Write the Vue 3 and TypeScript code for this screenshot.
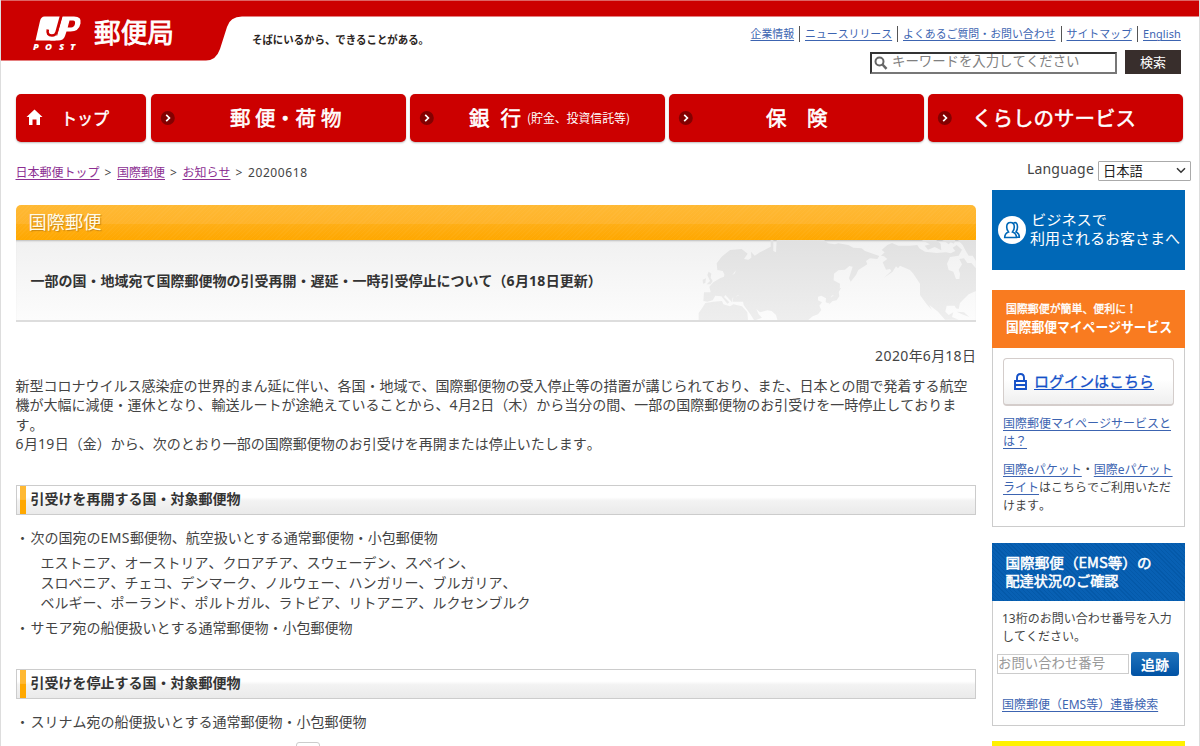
<script setup lang="ts">
interface NavLabel { text: string; x: number; y: number; size: number; length: number; stroke: number }
interface NavItem { width: number; home?: boolean; labels: NavLabel[] }

const utilityLinks: { text: string; width: number }[] = [
  { text: '企業情報', width: 43.5 },
  { text: 'ニュースリリース', width: 87 },
  { text: 'よくあるご質問・お問い合わせ', width: 152.5 },
  { text: 'サイトマップ', width: 65.5 },
  { text: 'English', width: 38 },
]

const navItems: NavItem[] = [
  { width: 130, home: true, labels: [{ text: 'トップ', x: 45, y: 31, size: 17, length: 48, stroke: 0.5 }] },
  {
    width: 255,
    labels: [
      { text: '郵', x: 79, y: 31.5, size: 20.5, length: 20.5, stroke: 0.6 },
      { text: '便', x: 104, y: 31.5, size: 20.5, length: 20.5, stroke: 0.6 },
      { text: '・', x: 124, y: 31.5, size: 20.5, length: 20.5, stroke: 0.6 },
      { text: '荷', x: 144.5, y: 31.5, size: 20.5, length: 20.5, stroke: 0.6 },
      { text: '物', x: 170, y: 31.5, size: 20.5, length: 20.5, stroke: 0.6 },
    ],
  },
  {
    width: 255,
    labels: [
      { text: '銀', x: 59, y: 31.5, size: 20.5, length: 20.5, stroke: 0.6 },
      { text: '行', x: 90.500, y: 31.5, size: 20.5, length: 20.5, stroke: 0.6 },
      { text: '(貯金、投資信託等)', x: 117, y: 29, size: 12, length: 103, stroke: 0 },
    ],
  },
  {
    width: 255,
    labels: [
      { text: '保', x: 97, y: 31.5, size: 20.5, length: 20.5, stroke: 0.6 },
      { text: '険', x: 138, y: 31.5, size: 20.5, length: 20.5, stroke: 0.6 },
    ],
  },
  { width: 255, labels: [{ text: 'くらしのサービス', x: 44, y: 31.5, size: 20.5, length: 164, stroke: 0.5 }] },
]

const crumbs: string[] = ['日本郵便トップ', '国際郵便', 'お知らせ']
</script>

<template>
  <div class="page">
    <header class="header">
      <svg class="header-shape" width="1200" height="62" viewBox="0 0 1200 62">
        <path d="M0 0H1200V16.500H242Q230 16.500 227 27L220 49Q216 60.500 206 60.500H0Z" fill="#c00" />
        <path d="M0 .5H1200" stroke="#d66" />
      </svg>
      <svg class="logo" width="440" height="62" viewBox="0 0 440 62">
        <path d="M44.500 16.500H61L55.500 40.500H35.500L40 21Q41 16.500 44.500 16.500Z" fill="#fff" />
        <path d="M62.500 16.500H74Q82 16.500 80.500 23.500Q79 31.500 70.500 31.500H66.500L65 36Q63.500 40.500 58 40.500H50L54 36H57Z" fill="#fff" />
        <path d="M69.500 20.500H73Q75.500 20.500 75 23.700Q74.200 27.500 71 27.500H67.700Z" fill="#c00" />
        <path d="M61.200 15.500L56.600 32Q55.700 35.500 52 35.500Q46.500 35.500 47.800 29.500" fill="none" stroke="#c00" stroke-width="2.600" />
        <g fill="#fff" font-family="'Open Sans', sans-serif" font-size="9.500" font-style="italic" font-weight="800">
          <text x="33" y="50">P</text><text x="45" y="50">O</text><text x="59" y="50">S</text><text x="70" y="50">T</text>
        </g>
        <text x="94" y="42.500" font-size="26.800" textLength="80" lengthAdjust="spacingAndGlyphs" fill="#fff" stroke="#fff" stroke-width=".8">郵便局</text>
        <text x="252" y="44" font-size="11" font-weight="700" textLength="177" lengthAdjust="spacingAndGlyphs" fill="#2b2421">そばにいるから、できることがある。</text>
      </svg>
      <div class="tools">
        <nav class="utility">
          <a v-for="link in utilityLinks" :key="link.text" href="#" :style="{ width: link.width + 'px' }">{{ link.text }}</a>
        </nav>
        <div class="search">
          <div class="search-field">
            <svg width="14" height="14" viewBox="0 0 14 14" fill="none" stroke="#666">
              <circle cx="5.500" cy="5.500" r="4" stroke-width="2" /><path d="M8.500 8.500L12.500 12.800" stroke-width="2.500" />
            </svg>
            <span>キーワードを入力してください</span>
          </div>
          <button class="search-button">検索</button>
        </div>
      </div>
    </header>

    <nav class="global-nav">
      <a v-for="(item, i) in navItems" :key="i" href="#" class="nav-item" :style="{ width: item.width + 'px' }">
        <svg :width="item.width" height="48" :viewBox="`0 0 ${item.width} 48`" fill="#fff">
          <path v-if="item.home" d="M18.500 15.500L26.500 23H24V31H20.500V25.500H16.500V31H13V23H10.500Z" />
          <template v-else>
            <circle cx="16.800" cy="24" r="7" fill="#830000" />
            <path d="M15.200 20.800L18.400 24L15.200 27.200" fill="none" stroke="#fff" stroke-width="1.700" />
          </template>
          <text v-for="label in item.labels" :key="label.text" :x="label.x" :y="label.y" :font-size="label.size" :textLength="label.length" lengthAdjust="spacingAndGlyphs" stroke="#fff" :stroke-width="label.stroke">{{ label.text }}</text>
        </svg>
      </a>
    </nav>

    <div class="columns">
      <main class="main">
        <div class="crumbs">
          <template v-for="c in crumbs" :key="c"><a href="#">{{ c }}</a><span class="sep">&gt;</span></template>20200618
        </div>

        <h1 class="category">国際郵便</h1>
        <section class="hero">
          <svg class="map" width="296" height="80" viewBox="0 135 888 240">
            <defs>
              <linearGradient id="land" x1="0" y1="135" x2="0" y2="375" gradientUnits="userSpaceOnUse">
                <stop offset="0" stop-color="#e1e1e1" /><stop offset="1" stop-color="#eeeeee" />
              </linearGradient>
            </defs>
            <g fill="url(#land)">
              <path d="M70 318L72 292L92 292L88 275L100 262L120 250L132 245L134 232L140 232L148 246L165 235L168 222L155 215L158 195L170 188L160 200L158 212L170 222L160 236L150 248L136 244L128 228L112 225L110 205L125 185L150 165L185 162L203 176L192 192L205 194L214 188L213 170L224 182L240 172L272 155V135H280V168L288 172L290 135H432L444 145L465 148L475 145L505 150L520 158L545 160L555 168L598 183L592 192L570 190L558 198L562 208L535 225L528 240L512 260L507 250L518 215L508 213L495 224L475 226L462 236L461 256L480 266L479 285L470 298L455 302L446 325L437 322L438 310L424 302L414 305L414 316L426 322L418 332L424 345L414 358L398 364L385 375H292L288 360L275 348L262 346L240 352L229 342L236 358L246 368L228 375H222L210 356L191 330L189 320L158 320L160 306L176 302L174 290L188 292L184 286H200L194 296L198 308L182 308L176 300L158 308L156 322L136 300L132 306L148 322L142 326L124 304L106 302L98 316L82 320Z" />
              <path d="M56 375V354L66 340L76 324L100 320L126 318L130 328L150 334L160 328L186 334L202 352L204 375Z" />
              <path d="M80 268L90 258L82 240L86 230L94 236L92 248L98 258L92 268ZM68 254L78 250L76 264L69 266Z" />
              <path d="M448 328L446 312L460 302L464 286L484 278L476 290L478 304L470 316L458 318Z" />
              <path d="M605 165L622 150L636 144L655 152H690L712 150L718 160L735 170L770 174L798 172L812 175L826 168L818 158L830 150L846 164L836 182L810 186L801 206L806 225L820 230L828 252H838L840 236L836 224L846 208L838 192L852 190L862 204L874 204L888 220V288L866 298L840 324L836 342L828 340L824 332L800 332L796 350L806 360L820 352L816 366L836 374H795L774 350L748 330L756 345L740 328L720 300V266L700 236L690 225L660 212L654 220L648 214L638 230L612 248L634 228L630 222L618 224L608 202L622 192L612 184L603 182L614 172Z" />
              <path d="M724 135H768L782 146L784 166L764 156L744 164L734 152L750 148ZM786 135H826L822 146L812 142L806 148L796 140ZM834 135H888V198L878 182L866 182L856 166L848 150ZM830 350L852 352L868 366L846 358Z" />
            </g>
          </svg>
          <h2>一部の国・地域宛て国際郵便物の引受再開・遅延・一時引受停止について（<span class="digits">6</span>月<span class="digits">18</span>日更新）</h2>
        </section>

        <p class="date"><span class="digits">2020</span>年<span class="digits">6</span>月<span class="digits">18</span>日</p>
        <p class="lead">
          新型コロナウイルス感染症の世界的まん延に伴い、各国・地域で、国際郵便物の受入停止等の措置が講じられており、また、日本との間で発着する航空<br>機が大幅に減便・運休となり、輸送ルートが途絶えていることから、<span class="digits">4</span>月<span class="digits">2</span>日（木）から当分の間、一部の国際郵便物のお引受けを一時停止しておりま<br>す。<br><span class="digits">6</span>月<span class="digits">19</span>日（金）から、次のとおり一部の国際郵便物のお引受けを再開または停止いたします。
        </p>

        <h3 class="bar">引受けを再開する国・対象郵便物</h3>
        <ul class="list">
          <li>次の国宛の<span class="digits">EMS</span>郵便物、航空扱いとする通常郵便物・小包郵便物
            <p>エストニア、オーストリア、クロアチア、スウェーデン、スペイン、<br>スロベニア、チェコ、デンマーク、ノルウェー、ハンガリー、ブルガリア、<br>ベルギー、ポーランド、ポルトガル、ラトビア、リトアニア、ルクセンブルク</p>
          </li>
          <li>サモア宛の船便扱いとする通常郵便物・小包郵便物</li>
        </ul>
        <h3 class="bar second">引受けを停止する国・対象郵便物</h3>
        <ul class="list">
          <li>スリナム宛の船便扱いとする通常郵便物・小包郵便物</li>
        </ul>
        <div class="tab-edge"></div>
      </main>

      <aside class="side">
        <div class="language">
          <span>Language</span>
          <div class="select">日本語
            <svg width="10" height="7" viewBox="0 0 10 7"><path d="M1 1.200L5 5.200L9 1.200" fill="none" stroke="#333" stroke-width="1.500" /></svg>
          </div>
        </div>

        <a href="#" class="business">
          <svg width="193" height="80" viewBox="0 0 193 80" fill="#fff">
            <circle cx="20" cy="40" r="14" />
            <g fill="none" stroke="#0068b7" stroke-width="1.600">
              <path d="M21.500 33Q25.500 31.500 25.500 37Q25.500 40 24 42Q27.500 43.500 27.300 47.200H25" />
              <path d="M18.500 32.500Q14.700 32.500 14.700 37Q14.700 40 16.500 42Q12.700 43.500 12.700 47.500H24.500Q24.500 43.500 20.500 42Q22.300 40 22.300 37Q22.300 32.500 18.500 32.500Z" />
            </g>
            <text x="39" y="35" font-size="14" textLength="76" lengthAdjust="spacingAndGlyphs">ビジネスで</text>
            <text x="38" y="53.500" font-size="14.500" textLength="150" lengthAdjust="spacingAndGlyphs">利用されるお客さまへ</text>
          </svg>
        </a>

        <section class="card mypage">
          <svg class="card-head orange" width="193" height="58" viewBox="0 0 193 58" fill="#fff">
            <text x="14" y="23" font-size="11" textLength="131" lengthAdjust="spacingAndGlyphs" stroke="#fff" stroke-width=".35">国際郵便が簡単、便利に！</text>
            <text x="14" y="41.500" font-size="13.500" font-weight="700" textLength="166" lengthAdjust="spacingAndGlyphs">国際郵便マイページサービス</text>
          </svg>
          <a href="#" class="login">
            <svg width="13" height="17" viewBox="0 0 13 17" fill="none" stroke="#1450c8" stroke-width="1.900">
              <path d="M1 8H12V16H1ZM3 8V5Q3 1 6.500 1T10 5V8M1 12H12" />
            </svg>
            <span>ログインはこちら</span>
          </a>
          <p><a href="#">国際郵便マイページサービスと<br>は？</a></p>
          <p class="packet"><a href="#">国際eパケット</a>・<a href="#">国際eパケット<br>ライト</a>はこちらでご利用いただ<br>けます。</p>
        </section>

        <section class="card tracking">
          <svg class="card-head blue" width="193" height="58" viewBox="0 0 193 58" fill="#fff" stroke="#fff" stroke-width=".5">
            <text x="13.500" y="25" font-size="14" textLength="146" lengthAdjust="spacingAndGlyphs">国際郵便（EMS等）の</text>
            <text x="13.500" y="43" font-size="14" textLength="113" lengthAdjust="spacingAndGlyphs">配達状況のご確認</text>
          </svg>
          <p>13桁のお問い合わせ番号を入力<br>してください。</p>
          <div class="track-form">
            <div class="track-field">お問い合わせ番号</div>
            <button>追跡</button>
          </div>
          <p class="batch"><a href="#">国際郵便（EMS等）連番検索</a></p>
        </section>
        <div class="yellow"></div>
      </aside>
    </div>
  </div>
</template>

<style>
body { margin: 0; }
</style>

<style scoped>
.page {
  box-sizing: border-box;
  width: 1200px;
  height: 746px;
  overflow: hidden;
  position: relative;
  background: #fff;
  color: #444;
  font: 14px/19.6px "Noto Sans", "Noto Sans CJK JP", sans-serif;
  font-kerning: none;
  text-spacing-trim: space-all;
}
.page::before, .page::after {
  content: "";
  position: absolute;
  top: 0;
  bottom: 0;
  left: 0;
  width: 1px;
  background: #ddd;
  z-index: 2;
}
.page::after { left: auto; right: 0; }
svg { display: block; font-family: "Noto Sans CJK JP", sans-serif; overflow: visible; }
h1, h2, h3, p, ul { margin: 0; padding: 0; }
a { color: #3c64b1; text-decoration: underline; text-underline-offset: 2px; text-decoration-thickness: 1px; }
button { border: 0; padding: 0; color: #fff; font-family: "Noto Sans CJK JP", sans-serif; }
.digits { letter-spacing: .4px; }

.header { position: relative; height: 93.500px; display: flex; justify-content: space-between; }
.header-shape { position: absolute; left: 0; top: 0; }
.logo { position: relative; }
.tools { position: relative; padding: 26px 19px 0 0; display: flex; flex-direction: column; align-items: flex-end; }
.utility { display: flex; font-size: 10.900px; line-height: 16px; }
.utility a { white-space: nowrap; }
.utility a + a { margin-left: 5px; padding-left: 5px; border-left: 1px solid #555; }
.utility a:last-child { letter-spacing: .12px; }
.search { display: flex; gap: 8px; margin-top: 8px; }
.search-field {
  box-sizing: border-box;
  width: 247px;
  height: 22px;
  margin-top: 1.500px;
  border: 2px solid #777;
  border-top-color: #333;
  border-left-color: #333;
  display: flex;
  align-items: center;
  gap: 4px;
  padding-left: 2px;
  font-size: 13.400px;
  line-height: 16px;
  color: #808080;
}
.search-field span { white-space: nowrap; margin-top: -3px; }
.search-button { width: 56px; height: 24px; background: #382e2c; font-size: 13px; line-height: 24px; }

.global-nav { display: flex; gap: 4.200px; margin-left: 16.400px; height: 48px; }
.nav-item { flex: none; height: 48px; background: #c00; border-radius: 5px; box-shadow: 0 1px 2px #bbb; }

.columns { display: flex; }
.main { width: 960.500px; margin-left: 15.500px; padding-top: 21px; }
.crumbs { font-size: 12px; line-height: 20px; display: flex; letter-spacing: .6px; }
.crumbs a { color: #8c2f92; letter-spacing: 0; }
.crumbs .sep { margin: 0 5px; }
.category {
  height: 35px;
  margin-top: 22.500px;
  padding-left: 13px;
  border-radius: 5px 5px 0 0;
  background: repeating-linear-gradient(135deg, #ffffff08 0 1px, transparent 1px 3px), linear-gradient(#ffb934, #ffb42a 53%, #ffae16 54%, #ffa800);
  color: #fffbe9;
  font-size: 18.300px;
  font-weight: 400;
  line-height: 34px;
  text-shadow: 1px 1px 1px #c98512;
}
.hero {
  position: relative;
  box-sizing: border-box;
  height: 82px;
  border-bottom: 2px solid #ddd;
  background: linear-gradient(#f1f1f1, #fcfcfc);
  box-shadow: inset 0 2px 2px -1px #bbb;
  overflow: hidden;
}
.map { position: absolute; right: 0; top: 0; }
.hero h2 { position: relative; padding: 31px 0 0 15px; font-size: 14px; line-height: 20px; color: #333; }
.date { margin-top: 24px; text-align: right; }
.lead { margin-top: 10px; white-space: nowrap; }
.bar {
  box-sizing: border-box;
  display: flex;
  height: 29.500px;
  margin-top: 31.400px;
  border: 1px solid #ccc;
  background: linear-gradient(#fff 40%, #f3f3f3 52%, #eaeaea);
  font-size: 14px;
  line-height: 26px;
  color: #333;
}
.bar::before { content: ""; width: 6px; height: 27.500px; margin: 0 5px 0 3px; background: linear-gradient(#ffb933 48%, #ffa800 50%); }
.list { list-style: none; margin-top: 13.500px; }
.list li { position: relative; padding-left: 15px; margin-top: 6px; white-space: nowrap; }
.list li::before { content: "・"; position: absolute; left: 0; }
.list li p { margin: 5.500px 0 0 10px; }
.bar.second { margin-top: 31.500px; }
.tab-edge { width: 22px; height: 10px; margin: 10px 0 0 280.500px; border: 1px solid #ccc; border-radius: 3px; }

.side { width: 193px; margin-left: 16px; font-size: 12px; line-height: 18px; }
.language { display: flex; align-items: flex-start; gap: 4px; width: 199px; justify-content: flex-end; padding-top: 18px; height: 30.500px; font-size: 14px; white-space: nowrap; }
.language > span { letter-spacing: .2px; }
.select { box-sizing: border-box; width: 93px; height: 20px; margin-top: 1px; padding: 0 4px; border: 1px solid #aaa; border-radius: 1px; display: flex; align-items: center; justify-content: space-between; font-size: 13.300px; color: #222; line-height: 18px; }
.business { display: block; height: 80px; background: #0068b7; }
.card { box-sizing: border-box; border: 1px solid #ccc; white-space: nowrap; padding: 0 10px; }
.card-head { margin: -1px -11px 0; }
.orange { background: #f97b20; }
.blue { background: repeating-linear-gradient(45deg, #0860b3 0 2px, #0459a9 2px 3px); }
.mypage { height: 237px; margin-top: 20px; }
.login {
  box-sizing: border-box;
  display: flex;
  align-items: center;
  gap: 7px;
  width: 171px;
  height: 48px;
  margin: 10px 0 9px;
  padding: 0 0 1px 10px;
  border: 1px solid #d4cdcb;
  border-bottom-width: 2px;
  border-radius: 4px;
  background: linear-gradient(#fff, #fff 45%, #efefef);
  color: #1450c8;
  font-size: 15px;
  -webkit-text-stroke: .3px #1450c8;
}
.packet { margin-top: 10px; }
.tracking { height: 183px; margin-top: 16px; }
.tracking > p { margin-top: 9px; margin-left: -1px; }
.track-form { display: flex; gap: 2px; margin: 6px -5px 0 -6px; align-items: center; }
.track-field { box-sizing: border-box; width: 132px; height: 20px; border: 1px solid #ccc; font-size: 13.400px; line-height: 16px; color: #999; }
.track-form button { width: 48px; height: 24px; border-radius: 3px; background: linear-gradient(#1f73bd, #0052a4); font-size: 14px; font-weight: 700; line-height: 23px; }
.tracking > .batch { margin-top: 20px; }
.yellow { height: 20px; margin-top: 15px; background: #fff100; }
</style>
